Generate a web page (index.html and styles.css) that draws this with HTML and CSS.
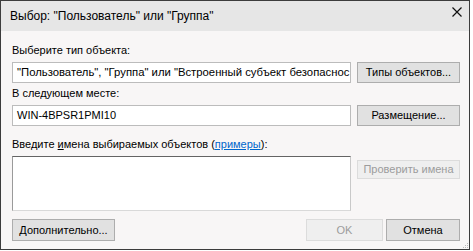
FILE: index.html
```html
<!DOCTYPE html>
<html lang="ru">
<head>
    <meta charset="UTF-8">
    <title>Выбор: "Пользователь" или "Группа"</title>
    <link rel="stylesheet" href="styles.css">
</head>
<body>
    <div class="window">
        <div class="titlebar">
            <span class="title">Выбор: "Пользователь" или "Группа"</span>
            <svg class="close" width="10" height="10" viewBox="0 0 10 10">
                <path d="M0.5 0.5 L9.5 9.5 M9.5 0.5 L0.5 9.5" stroke="#111" stroke-width="1.2" fill="none"/>
            </svg>
        </div>
        <div class="content">
            <div class="label lbl-type">Выберите тип объекта:</div>
            <div class="row">
                <div class="field field-type">"Пользователь", "Группа" или "Встроенный субъект безопаснос</div>
                <div class="btn">Типы объектов...</div>
            </div>

            <div class="label lbl-place">В следующем месте:</div>
            <div class="row">
                <div class="field">WIN-4BPSR1PMI10</div>
                <div class="btn">Размещение...</div>
            </div>

            <div class="label lbl-names">Введите <u>и</u>мена выбираемых объектов (<a href="#" class="link">примеры</a>):</div>
            <div class="row row-top">
                <div class="field area"></div>
                <div class="btn disabled btn-check">Проверить имена</div>
            </div>

            <div class="row footer">
                <div class="btn btn-more">Дополнительно...</div>
                <div class="footer-right">
                    <div class="btn disabled btn-ok">OK</div>
                    <div class="btn btn-cancel">Отмена</div>
                </div>
            </div>
        </div>
        <svg class="grip" width="7" height="7" viewBox="0 0 7 7">
            <rect x="5" y="1" width="1" height="1" fill="#b8b8b8"/>
            <rect x="3" y="3" width="1" height="1" fill="#b8b8b8"/>
            <rect x="5" y="3" width="1" height="1" fill="#b8b8b8"/>
            <rect x="1" y="5" width="1" height="1" fill="#b8b8b8"/>
            <rect x="3" y="5" width="1" height="1" fill="#b8b8b8"/>
            <rect x="5" y="5" width="1" height="1" fill="#b8b8b8"/>
        </svg>
    </div>
</body>
</html>
```

FILE: styles.css
```css
body{
    margin: 0;
    background: #fff;
    font: 11px/15px "Liberation Sans", Arial, sans-serif;
    color: #000;
}
.window{
    position: relative;
    box-sizing: border-box;
    width: 470px;
    height: 250px;
    border: 1px solid #3c3c3c;
    background: #f8f6f6;
}
.titlebar{
    height: 30px;
    background: #e6e6e6;
    display: flex;
    align-items: center;
    justify-content: space-between;
    padding: 0 7px 0 9px;
    font-size: 12px;
}
.title{
    margin-top: 1px;
}
.close{
    margin-top: -8px;
}
.content{
    padding: 0 9px 0 11px;
}
.label{
    height: 15px;
}
.lbl-type{
    margin-top: 12px;
}
.lbl-place{
    margin-top: 3px;
}
.lbl-names{
    margin-top: 11px;
}
.row{
    display: flex;
    align-items: center;
    justify-content: space-between;
    margin-top: 4px;
}
.row-top{
    align-items: flex-start;
}
.field{
    box-sizing: border-box;
    width: 339px;
    height: 21px;
    padding: 2px 4px;
    background: #fff;
    border: 1px solid #bcbcbc;
    white-space: nowrap;
    overflow: hidden;
}
.field-type{
    font-size: 11.3px;
    padding-right: 0;
}
.field.area{
    height: 55px;
    border-color: #646464 #c9c9c9 #d9d9d9 #9a9a9a;
}
.btn{
    box-sizing: border-box;
    width: 103px;
    height: 21px;
    border: 1px solid #adadad;
    background: #e1e1e1;
    text-align: center;
    line-height: 19px;
    white-space: nowrap;
}
.btn.disabled{
    color: #9c9c9c;
    background: #efefef;
    border-color: #dcdcdc;
}
.btn-check{
    margin-top: 4px;
    height: 19px;
    line-height: 17px;
}
.link{
    color: #0066cc;
}
.footer{
    margin-top: 8px;
}
.btn-more{
    width: 103px;
    height: 22px;
    line-height: 20px;
}
.footer-right{
    display: flex;
    gap: 3px;
}
.btn-ok{
    width: 77px;
}
.btn-cancel{
    width: 74px;
}
.btn-ok, .btn-cancel{
    height: 22px;
    line-height: 20px;
}
.grip{
    position: absolute;
    right: 0;
    bottom: 0;
}
```
